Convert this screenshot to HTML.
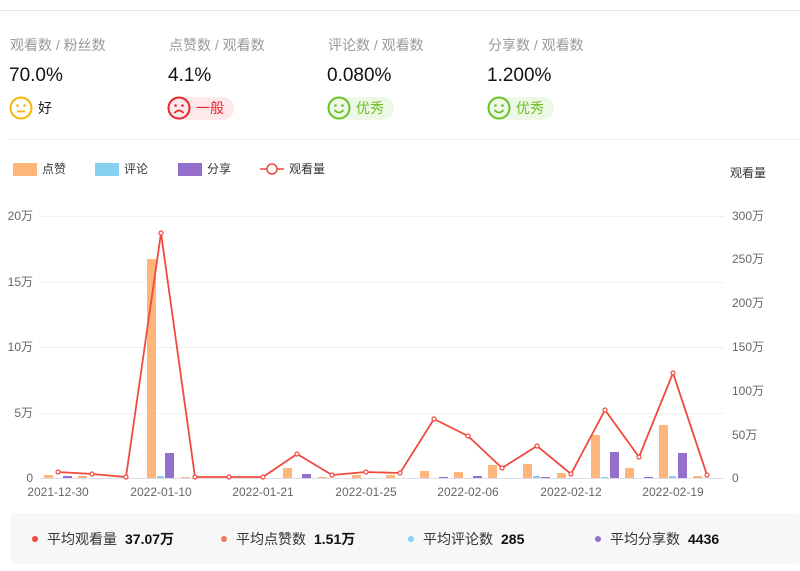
<!DOCTYPE html>
<html><head><meta charset="utf-8"><style>
body{margin:0;width:800px;height:571px;background:#fff;font-family:"Liberation Sans","Noto Sans CJK SC",sans-serif;position:relative;overflow:hidden}
.t{position:absolute;color:#999;font-size:14px;top:35px}
.v{position:absolute;color:#111;font-size:19px;top:65px}
.b{position:absolute;top:97px;height:23px;border-radius:12px;font-size:14px;line-height:23px}
.b svg{position:absolute;left:-1px;top:-1px}
.b span{position:absolute;left:28px;top:0;white-space:nowrap}
.stats{position:absolute;left:10px;top:513px;width:790px;height:51px;background:#f6f7f9;border-radius:4px;font-size:14px;color:#333}
.s{position:absolute;top:16px;white-space:nowrap}
.s i{display:inline-block;width:6px;height:6px;border-radius:50%;margin-right:9px;vertical-align:2px}
.s b{margin-left:8px;color:#111}
</style></head><body>
<div style="position:absolute;left:0;top:10px;width:800px;height:1px;background:#e8e8e8"></div>
<div style="position:absolute;left:10px;top:139px;width:790px;height:1px;background:#eee"></div>

<div class="t" style="left:10px">观看数 / 粉丝数</div>
<div class="t" style="left:169px">点赞数 / 观看数</div>
<div class="t" style="left:328px">评论数 / 观看数</div>
<div class="t" style="left:488px">分享数 / 观看数</div>
<div class="v" style="left:9px">70.0%</div>
<div class="v" style="left:168px">4.1%</div>
<div class="v" style="left:327px">0.080%</div>
<div class="v" style="left:487px">1.200%</div>

<div class="b" style="left:10px;width:50px"><svg width="25" height="25"><circle cx="12" cy="12" r="10.5" fill="none" stroke="#f7b500" stroke-width="2"/><circle cx="8.5" cy="9.5" r="1.3" fill="#f7b500"/><circle cx="15.5" cy="9.5" r="1.3" fill="#f7b500"/><line x1="8" y1="15.5" x2="16" y2="15.5" stroke="#f7b500" stroke-width="1.8"/></svg><span style="color:#222">好</span></div>
<div class="b" style="left:168px;width:66px;background:#fde8ea"><svg width="25" height="25"><circle cx="12" cy="12" r="10.5" fill="none" stroke="#e8252c" stroke-width="2"/><circle cx="8.5" cy="9.5" r="1.3" fill="#e8252c"/><circle cx="15.5" cy="9.5" r="1.3" fill="#e8252c"/><path d="M7.5 17 Q12 12 16.5 17" fill="none" stroke="#e8252c" stroke-width="1.8"/></svg><span style="color:#e8252c">一般</span></div>
<div class="b" style="left:328px;width:66px;background:#eef8e6"><svg width="25" height="25"><circle cx="12" cy="12" r="10.5" fill="none" stroke="#6bbf2a" stroke-width="2"/><circle cx="8.5" cy="9.5" r="1.3" fill="#6bbf2a"/><circle cx="15.5" cy="9.5" r="1.3" fill="#6bbf2a"/><path d="M7.5 14 Q12 19 16.5 14" fill="none" stroke="#6bbf2a" stroke-width="1.8"/></svg><span style="color:#6bbf2a">优秀</span></div>
<div class="b" style="left:488px;width:66px;background:#eef8e6"><svg width="25" height="25"><circle cx="12" cy="12" r="10.5" fill="none" stroke="#6bbf2a" stroke-width="2"/><circle cx="8.5" cy="9.5" r="1.3" fill="#6bbf2a"/><circle cx="15.5" cy="9.5" r="1.3" fill="#6bbf2a"/><path d="M7.5 14 Q12 19 16.5 14" fill="none" stroke="#6bbf2a" stroke-width="1.8"/></svg><span style="color:#6bbf2a">优秀</span></div>

<svg style="position:absolute;left:0;top:0" width="800" height="510" font-family="Liberation Sans,Noto Sans CJK SC,sans-serif" font-size="12">
<rect x="13" y="163" width="24" height="13" fill="#ffb67a"/><text x="42" y="173" fill="#333">点赞</text>
<rect x="95" y="163" width="24" height="13" fill="#86d0f0"/><text x="124" y="173" fill="#333">评论</text>
<rect x="178" y="163" width="24" height="13" fill="#9370cb"/><text x="207" y="173" fill="#333">分享</text>
<line x1="260" y1="169" x2="284" y2="169" stroke="#f04a3e" stroke-width="1.5"/><circle cx="272" cy="169" r="5" fill="#fff" stroke="#f04a3e" stroke-width="1.5"/><text x="289" y="173" fill="#333">观看量</text>
<text x="730" y="177" fill="#333">观看量</text>
<g stroke="#f0f0f0"><line x1="40" y1="216.5" x2="724" y2="216.5"/><line x1="40" y1="282.5" x2="724" y2="282.5"/><line x1="40" y1="347.5" x2="724" y2="347.5"/><line x1="40" y1="413.5" x2="724" y2="413.5"/></g>
<line x1="40" y1="478.5" x2="724" y2="478.5" stroke="#dde" />
<g fill="#666" text-anchor="end"><text x="33" y="220">20万</text><text x="33" y="286">15万</text><text x="33" y="351">10万</text><text x="33" y="417">5万</text><text x="33" y="482">0</text></g>
<g fill="#666"><text x="732" y="220">300万</text><text x="732" y="263">250万</text><text x="732" y="307">200万</text><text x="732" y="351">150万</text><text x="732" y="395">100万</text><text x="732" y="439">50万</text><text x="732" y="482">0</text></g>
<g fill="#666" text-anchor="middle"><text x="58" y="496">2021-12-30</text><text x="161" y="496">2022-01-10</text><text x="263" y="496">2022-01-21</text><text x="366" y="496">2022-01-25</text><text x="468" y="496">2022-02-06</text><text x="571" y="496">2022-02-12</text><text x="673" y="496">2022-02-19</text></g>
<g fill="#ffb67a">
<rect x="44" y="475" width="9" height="3"/><rect x="78" y="476" width="9" height="2"/><rect x="147" y="259" width="9" height="219"/><rect x="181" y="477" width="9" height="1"/><rect x="283" y="468" width="9" height="10"/><rect x="318" y="477" width="9" height="1"/><rect x="352" y="475" width="9" height="3"/><rect x="386" y="475" width="9" height="3"/><rect x="420" y="471" width="9" height="7"/><rect x="454" y="472" width="9" height="6"/><rect x="488" y="465" width="9" height="13"/><rect x="523" y="464" width="9" height="14"/><rect x="557" y="473" width="9" height="5"/><rect x="591" y="435" width="9" height="43"/><rect x="625" y="468" width="9" height="10"/><rect x="659" y="425" width="9" height="53"/><rect x="693" y="476" width="9" height="2"/>
</g>
<g fill="#86d0f0"><rect x="157" y="476" width="7" height="2"/><rect x="533" y="476" width="7" height="2"/><rect x="601" y="477" width="7" height="1"/><rect x="669" y="476" width="7" height="2"/></g>
<g fill="#9370cb"><rect x="63" y="476" width="9" height="2"/><rect x="165" y="453" width="9" height="25"/><rect x="302" y="474" width="9" height="4"/><rect x="439" y="477" width="9" height="1"/><rect x="473" y="476" width="9" height="2"/><rect x="541" y="477" width="9" height="1"/><rect x="610" y="452" width="9" height="26"/><rect x="644" y="477" width="9" height="1"/><rect x="678" y="453" width="9" height="25"/></g>
<polyline fill="none" stroke="#f04a3e" stroke-width="1.8" points="58,472 92,474 126,477 161,233 195,477 229,477 263,477 297,454 332,475 366,472 400,473 434,419 468,436 502,468 537,446 571,474 605,410 639,457 673,373 707,475"/>
<g fill="#fff" stroke="#f04a3e" stroke-width="1.2"><circle cx="58" cy="472" r="2"/><circle cx="92" cy="474" r="2"/><circle cx="126" cy="477" r="2"/><circle cx="161" cy="233" r="2"/><circle cx="195" cy="477" r="2"/><circle cx="229" cy="477" r="2"/><circle cx="263" cy="477" r="2"/><circle cx="297" cy="454" r="2"/><circle cx="332" cy="475" r="2"/><circle cx="366" cy="472" r="2"/><circle cx="400" cy="473" r="2"/><circle cx="434" cy="419" r="2"/><circle cx="468" cy="436" r="2"/><circle cx="502" cy="468" r="2"/><circle cx="537" cy="446" r="2"/><circle cx="571" cy="474" r="2"/><circle cx="605" cy="410" r="2"/><circle cx="639" cy="457" r="2"/><circle cx="673" cy="373" r="2"/><circle cx="707" cy="475" r="2"/></g>
</svg>

<div class="stats">
<div class="s" style="left:22px"><i style="background:#f04a3e"></i>平均观看量<b>37.07万</b></div>
<div class="s" style="left:211px"><i style="background:#ee7a5a"></i>平均点赞数<b>1.51万</b></div>
<div class="s" style="left:398px"><i style="background:#86d0f0"></i>平均评论数<b>285</b></div>
<div class="s" style="left:585px"><i style="background:#9370cb"></i>平均分享数<b>4436</b></div>
</div>
</body></html>
